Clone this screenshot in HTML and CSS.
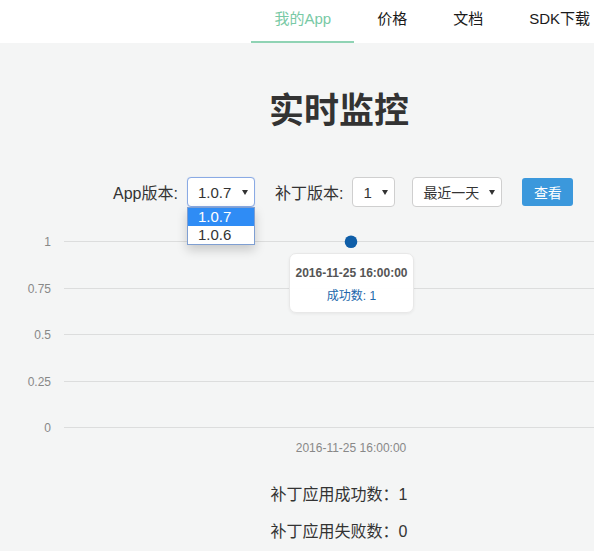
FILE: index.html
```html
<!DOCTYPE html>
<html lang="zh-CN">
<head>
<meta charset="utf-8">
<title>实时监控</title>
<link rel="stylesheet" href="styles.css">
</head>
<body>
<div class="page">
  <header class="header">
    <nav class="nav">
      <a class="nav-item active">我的App</a>
      <a class="nav-item">价格</a>
      <a class="nav-item">文档</a>
      <a class="nav-item">SDK下载</a>
    </nav>
  </header>

  <h1 class="title">实时监控</h1>

  <div class="controls">
    <span class="label label-app">App版本:</span>
    <div class="select select-app focused">
      <span class="select-text">1.0.7</span><span class="arrow"></span>
      <ul class="dropdown">
        <li class="option selected">1.0.7</li>
        <li class="option">1.0.6</li>
      </ul>
    </div>
    <span class="label label-patch">补丁版本:</span>
    <div class="select select-patch">
      <span class="select-text">1</span><span class="arrow"></span>
    </div>
    <div class="select select-range">
      <span class="select-text">最近一天</span><span class="arrow"></span>
    </div>
    <button class="btn">查看</button>
  </div>

  <div class="chart">
    <svg class="chart-svg" width="594" height="240" viewBox="0 0 594 240">
      <g class="grid">
        <line x1="64" y1="19.5" x2="594" y2="19.5"/>
        <line x1="64" y1="66.5" x2="594" y2="66.5"/>
        <line x1="64" y1="112.5" x2="594" y2="112.5"/>
        <line x1="64" y1="159.5" x2="594" y2="159.5"/>
        <line x1="64" y1="205.5" x2="594" y2="205.5"/>
      </g>
      <g class="ylabels">
        <text x="51" y="24">1</text>
        <text x="51" y="71">0.75</text>
        <text x="51" y="117">0.5</text>
        <text x="51" y="164">0.25</text>
        <text x="51" y="210">0</text>
      </g>
      <text class="xlabel" x="351" y="230">2016-11-25 16:00:00</text>
      <circle cx="351" cy="19.7" r="6.3" fill="#0f5ea8"/>
    </svg>
    <div class="tooltip">
      <div class="tip-title">2016-11-25 16:00:00</div>
      <div class="tip-value">成功数: 1</div>
    </div>
  </div>

  <div class="stats">
    <p class="stat">补丁应用成功数：1</p>
    <p class="stat">补丁应用失败数：0</p>
  </div>
</div>
</body>
</html>
```

FILE: styles.css
```css
html, body {
  margin: 0;
  padding: 0;
  overflow: hidden;
}
body {
  background: #f4f5f5;
  font-family: "Liberation Sans", "Noto Sans CJK SC", sans-serif;
  color: #333;
}
.page {
  width: 594px;
}
.header {
  height: 43px;
  background: #fff;
}
.nav {
  display: flex;
  padding-left: 251px;
  height: 43px;
}
.nav-item {
  display: block;
  box-sizing: border-box;
  height: 43px;
  padding: 0 22.5px 0 23.5px;
  line-height: 38px;
  font-size: 15px;
  color: #1a1a1a;
  border-bottom: 2px solid transparent;
  white-space: nowrap;
}
.nav-item:last-child {
  padding-right: 3px;
}
.nav-item.active {
  color: #78c9a5;
  border-bottom-color: #8fd3b4;
}
.title {
  margin: 50px 0 0;
  padding-left: 84px;
  font-size: 35px;
  line-height: 36px;
  font-weight: bold;
  text-align: center;
  color: #333;
}
.controls {
  display: flex;
  align-items: center;
  height: 30px;
  margin-top: 48px;
  padding-left: 113px;
}
.label {
  font-size: 16px;
  color: #333;
  white-space: nowrap;
}
.label-app { margin-right: 9px; }
.label-patch { margin-right: 9px; }
.select {
  position: relative;
  box-sizing: border-box;
  height: 30px;
  display: flex;
  align-items: center;
  justify-content: space-between;
  padding: 0 6px 0 10px;
  background: #fff;
  border: 1px solid #cfcfcf;
  border-radius: 4px;
  font-size: 15px;
  color: #333;
}
.select.focused {
  border-color: #8aaae4;
  box-shadow: 0 0 1px rgba(102, 153, 230, 0.4);
}
.select-app { width: 68px; margin-right: 20px; }
.select-patch { width: 43px; margin-right: 17px; }
.select-range { width: 90px; margin-right: 20px; font-size: 14px; }
.arrow {
  width: 0;
  height: 0;
  border-left: 3px solid transparent;
  border-right: 3px solid transparent;
  border-top: 5px solid #333;
}
.dropdown {
  position: absolute;
  left: -1px;
  top: 29px;
  width: 68px;
  box-sizing: border-box;
  margin: 0;
  padding: 0;
  list-style: none;
  background: #fff;
  border: 1px solid #7f9fd2;
  box-shadow: 0 5px 10px rgba(0, 0, 0, 0.18);
  z-index: 5;
}
.option {
  height: 18px;
  line-height: 18px;
  padding-left: 10px;
  font-size: 15px;
  color: #333;
}
.option.selected {
  background: #2f8cf5;
  color: #fff;
}
.btn {
  box-sizing: border-box;
  width: 51px;
  height: 28px;
  padding: 0;
  border: none;
  border-radius: 3px;
  background: #3b98dc;
  color: #fff;
  font-family: inherit;
  font-size: 14px;
}
.chart {
  position: relative;
  margin-top: 15px;
  height: 240px;
}
.chart-svg {
  display: block;
}
.grid line {
  stroke: #dcdddd;
  stroke-width: 1;
}
.ylabels text {
  font-family: "Liberation Sans", sans-serif;
  font-size: 12px;
  fill: #888;
  text-anchor: end;
}
.xlabel {
  font-family: "Liberation Sans", sans-serif;
  font-size: 12px;
  fill: #888;
  text-anchor: middle;
}
.tooltip {
  position: absolute;
  left: 289px;
  top: 31px;
  width: 125px;
  height: 60px;
  box-sizing: border-box;
  background: rgba(255, 255, 255, 0.96);
  border: 1px solid #e8e8e8;
  border-radius: 7px;
  box-shadow: 0 1px 3px rgba(0, 0, 0, 0.06);
  text-align: center;
  font-size: 12px;
}
.tip-title {
  margin-top: 11px;
  line-height: 16px;
  font-weight: bold;
  color: #555;
}
.tip-value {
  margin-top: 7px;
  line-height: 16px;
  color: #2167ab;
}
.stats {
  margin-top: 14px;
  padding-left: 84px;
  text-align: center;
}
.stat {
  margin: 0;
  font-size: 16px;
  line-height: 37px;
  color: #333;
}
```
